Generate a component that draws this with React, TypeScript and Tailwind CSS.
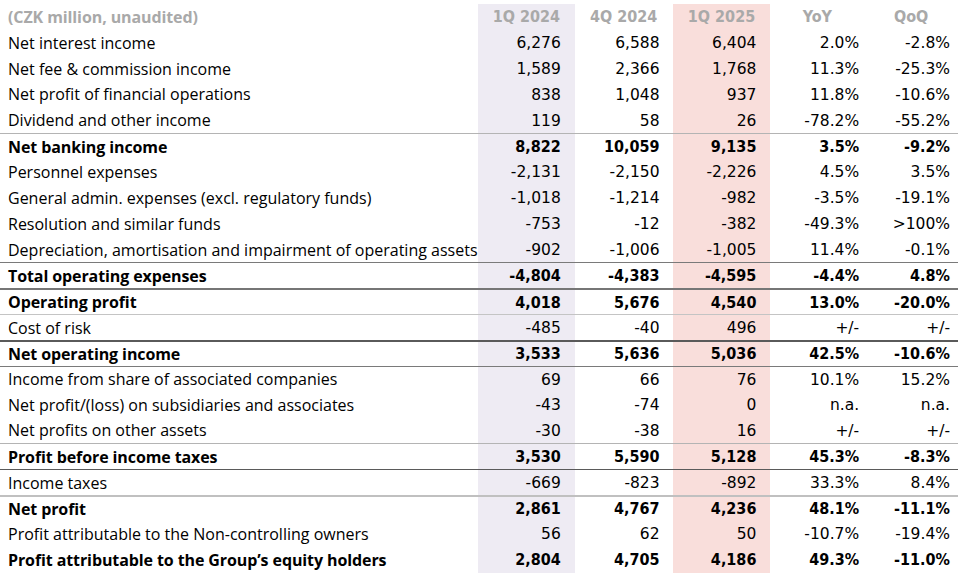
import React from "react";

type Row = {
  label: string;
  v: [string, string, string, string, string];
  bold?: boolean;
  line?: string;
};

const rows: Row[] = [
  { label: "Net interest income", v: ["6,276", "6,588", "6,404", "2.0%", "-2.8%"] },
  { label: "Net fee & commission income", v: ["1,589", "2,366", "1,768", "11.3%", "-25.3%"] },
  { label: "Net profit of financial operations", v: ["838", "1,048", "937", "11.8%", "-10.6%"] },
  { label: "Dividend and other income", v: ["119", "58", "26", "-78.2%", "-55.2%"] },
  { label: "Net banking income", v: ["8,822", "10,059", "9,135", "3.5%", "-9.2%"], bold: true, line: "border-t border-[#b4b4b4]" },
  { label: "Personnel expenses", v: ["-2,131", "-2,150", "-2,226", "4.5%", "3.5%"] },
  { label: "General admin. expenses (excl. regulatory funds)", v: ["-1,018", "-1,214", "-982", "-3.5%", "-19.1%"] },
  { label: "Resolution and similar funds", v: ["-753", "-12", "-382", "-49.3%", ">100%"] },
  { label: "Depreciation, amortisation and impairment of operating assets", v: ["-902", "-1,006", "-1,005", "11.4%", "-0.1%"] },
  { label: "Total operating expenses", v: ["-4,804", "-4,383", "-4,595", "-4.4%", "4.8%"], bold: true, line: "border-t border-[#7a7a7a]" },
  { label: "Operating profit", v: ["4,018", "5,676", "4,540", "13.0%", "-20.0%"], bold: true, line: "border-t-2 border-[#767676]" },
  { label: "Cost of risk", v: ["-485", "-40", "496", "+/-", "+/-"], line: "border-t border-[#c4c4c4]" },
  { label: "Net operating income", v: ["3,533", "5,636", "5,036", "42.5%", "-10.6%"], bold: true, line: "border-t-2 border-[#5a5a5a]" },
  { label: "Income from share of associated companies", v: ["69", "66", "76", "10.1%", "15.2%"], line: "border-t border-[#7a7a7a]" },
  { label: "Net profit/(loss) on subsidiaries and associates", v: ["-43", "-74", "0", "n.a.", "n.a."] },
  { label: "Net profits on other assets", v: ["-30", "-38", "16", "+/-", "+/-"] },
  { label: "Profit before income taxes", v: ["3,530", "5,590", "5,128", "45.3%", "-8.3%"], bold: true, line: "border-t border-[#b4b4b4]" },
  { label: "Income taxes", v: ["-669", "-823", "-892", "33.3%", "8.4%"], line: "border-t border-[#5a5a5a]" },
  { label: "Net profit", v: ["2,861", "4,767", "4,236", "48.1%", "-11.1%"], bold: true, line: "border-t-2 border-[#c0c0c0]" },
  { label: "Profit attributable to the Non-controlling owners", v: ["56", "62", "50", "-10.7%", "-19.4%"] },
  { label: "Profit attributable to the Group\u2019s equity holders", v: ["2,804", "4,705", "4,186", "49.3%", "-11.0%"], bold: true },
];

// width / shading / right padding per value column
const cols = [
  { w: "w-[97px] bg-[#eeebf3]", pr: "pr-[14px]" },
  { w: "w-[98px]", pr: "pr-[13px]" },
  { w: "w-[98px] bg-[#f9dedb]", pr: "pr-[14px]" },
  { w: "w-[94px]", pr: "pr-[5px]" },
  { w: "w-[94px]", pr: "pr-[8px]" },
];

const headers = ["1Q 2024", "4Q 2024", "1Q 2025", "YoY", "QoQ"];

const labelFont = "font-['Open_Sans','Liberation_Sans',sans-serif] text-[16px]";
const numFont = "font-['DejaVu_Sans','Liberation_Sans',sans-serif] text-[15.5px] pt-[2px]";
const numBold = "font-['DejaVu_Sans_Condensed','DejaVu_Sans',sans-serif] font-bold text-[16px] pt-[1px]";

export default function App() {
  return (
    <div className="w-[964px] h-[577px] bg-white pt-[4px] text-black">
      <div className="w-[958px]">
        {/* Header */}
        <div className="flex h-[25.85px] items-stretch">
          <div className={`w-[479px] flex items-center pl-[8px] font-bold tracking-[-0.1px] text-[#a9a9a9] ${labelFont}`}>
            (CZK million, unaudited)
          </div>
          {headers.map((h, i) => (
            <div
              key={h}
              className={`${cols[i].w} flex items-center justify-center text-[#a9a9a9] ${numBold}`}
            >
              {h}
            </div>
          ))}
        </div>

        {rows.map((r) => (
          <div key={r.label} className={`flex h-[25.85px] items-stretch ${r.line ?? ""}`}>
            <div
              className={`w-[479px] flex items-center pl-[8px] whitespace-nowrap ${labelFont} ${r.bold ? "font-bold tracking-[-0.1px]" : ""}`}
            >
              {r.label}
            </div>
            {r.v.map((val, i) => (
              <div
                key={i}
                className={`${cols[i].w} ${cols[i].pr} flex items-center justify-end whitespace-nowrap ${r.bold ? numBold : numFont}`}
              >
                {val}
              </div>
            ))}
          </div>
        ))}
      </div>
    </div>
  );
}
